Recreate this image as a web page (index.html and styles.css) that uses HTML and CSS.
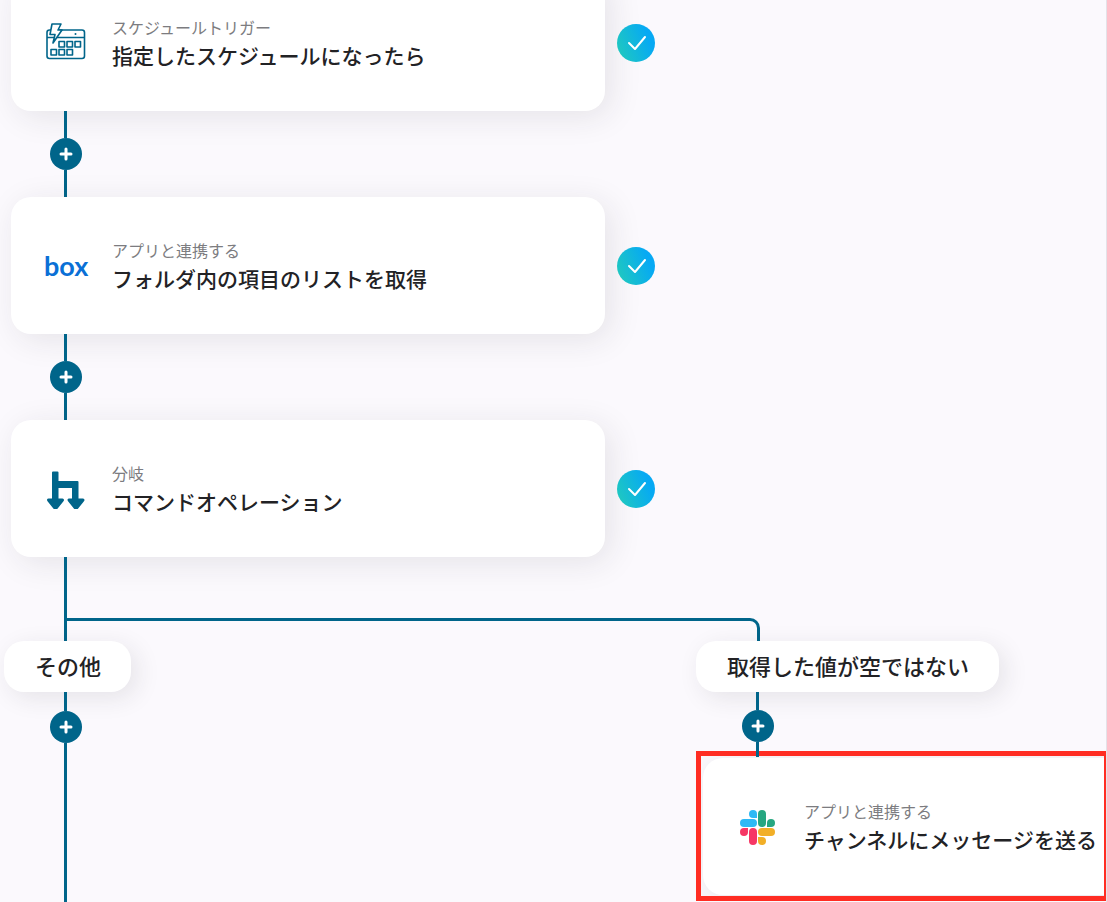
FILE: index.html
```html
<!DOCTYPE html>
<html lang="ja">
<head>
    <meta charset="UTF-8">
    <meta name="viewport" content="width=device-width, initial-scale=1.0">
    <title>フローボット</title>
    <link rel="stylesheet" href="styles.css">
</head>
<body>
    <svg width="0" height="0" class="defs" aria-hidden="true">
        <defs>
            <linearGradient id="done-fill" x1="0" y1="0.7" x2="1" y2="0.3">
                <stop offset="0" stop-color="#1fc8c0"/>
                <stop offset="0.85" stop-color="#06a9f4"/>
            </linearGradient>
            <symbol id="done" viewBox="0 0 38 38">
                <circle cx="19" cy="19" r="19" fill="url(#done-fill)"/>
                <path d="M12 19l6 6 10-12" fill="none" stroke="#fff" stroke-width="2" stroke-linecap="round" stroke-linejoin="round"/>
            </symbol>
            <symbol id="plus" viewBox="0 0 32 32">
                <path d="M16 11v10M11 16h10" stroke="#fff" stroke-width="3" stroke-linecap="round"/>
            </symbol>
        </defs>
    </svg>

    <main class="flow">
        <div class="step">
            <div class="card">
                <svg class="icon" viewBox="0 0 44 44" fill="none" stroke="#00658a" stroke-width="1.6" stroke-linejoin="round">
                    <rect x="3" y="9" width="37.500" height="28.500" rx="2.5"/>
                    <path d="M3 16.5h37"/>
                    <path d="M8 3h9l-3 6h4L9 22l2-8.500H6z" fill="#fff"/>
                    <circle cx="31.500" cy="13" r="1" fill="#00658a" stroke="none"/>
                    <path d="M15 20.500h5.500v5.500h-5.500zM23 20.500h5.500v5.500h-5.500zM31 20.500h5.500v5.500h-5.500zM7 28.500h5.500v5.500H7zM15 28.500h5.500v5.500h-5.500zM23 28.500h5.500v5.500h-5.500z"/>
                </svg>
                <div class="card-text">
                    <p class="kind">スケジュールトリガー</p>
                    <h2>指定したスケジュールになったら</h2>
                </div>
            </div>
            <svg class="done" role="img" aria-label="完了"><use href="#done"/></svg>
        </div>

        <div class="connector">
            <span class="line"></span>
            <button type="button" class="add" aria-label="追加"><svg><use href="#plus"/></svg></button>
            <span class="line"></span>
        </div>

        <div class="step">
            <div class="card">
                <span class="icon box-logo">box</span>
                <div class="card-text">
                    <p class="kind">アプリと連携する</p>
                    <h2>フォルダ内の項目のリストを取得</h2>
                </div>
            </div>
            <svg class="done" role="img" aria-label="完了"><use href="#done"/></svg>
        </div>

        <div class="connector">
            <span class="line"></span>
            <button type="button" class="add" aria-label="追加"><svg><use href="#plus"/></svg></button>
            <span class="line"></span>
        </div>

        <div class="step">
            <div class="card">
                <svg class="icon" viewBox="0 0 44 44" fill="#00658a" stroke="#00658a" stroke-linejoin="round">
                    <path d="M9 5.500h4.500v9.500h20v17h-4.500v-12H13.500v12h-4.500z" stroke-width="2"/>
                    <path d="M4.500 33h14l-6 7.500h-2zM25 33h14l-6 7.500h-2z" stroke-width="3"/>
                </svg>
                <div class="card-text">
                    <p class="kind">分岐</p>
                    <h2>コマンドオペレーション</h2>
                </div>
            </div>
            <svg class="done" role="img" aria-label="完了"><use href="#done"/></svg>
        </div>

        <div class="fork-stem"></div>
        <div class="fork"></div>

        <div class="branches">
            <section class="branch">
                <h3 class="condition">その他</h3>
                <div class="connector open">
                    <span class="line"></span>
                    <button type="button" class="add" aria-label="追加"><svg><use href="#plus"/></svg></button>
                    <span class="line"></span>
                </div>
            </section>

            <section class="branch">
                <h3 class="condition">取得した値が空ではない</h3>
                <div class="connector short">
                    <span class="line"></span>
                    <button type="button" class="add" aria-label="追加"><svg><use href="#plus"/></svg></button>
                    <span class="line"></span>
                </div>
                <div class="highlight">
                    <div class="card">
                        <svg class="icon" viewBox="0 0 44 44">
                            <g fill="#2eb9f5">
                                <rect x="4" y="14" width="17" height="8" rx="4"/>
                                <path d="M21 13h-4a4 4 0 1 1 4-4z"/>
                            </g>
                            <g fill="#27a781">
                                <rect x="22" y="5" width="8" height="17" rx="4"/>
                                <path d="M31 22v-4a4 4 0 1 1 4 4z"/>
                            </g>
                            <g fill="#f2af27">
                                <rect x="22" y="23" width="17" height="8" rx="4"/>
                                <path d="M22 32h4a4 4 0 1 1-4 4z"/>
                            </g>
                            <g fill="#f63765">
                                <rect x="13" y="23" width="8" height="17" rx="4"/>
                                <path d="M12 23v4a4 4 0 1 1-4-4z"/>
                            </g>
                        </svg>
                        <div class="card-text">
                            <p class="kind">アプリと連携する</p>
                            <h2>チャンネルにメッセージを送る</h2>
                        </div>
                    </div>
                </div>
            </section>
        </div>
    </main>
</body>
</html>
```
FILE: styles.css
```css
* {
    box-sizing: border-box;
}

body {
    font-family: "Noto Sans CJK JP", "Noto Sans", sans-serif;
    margin: 0;
    min-height: 100vh;
    background-color: #fbf9fd;
    color: #222225;
    border-right: 1px solid #e4e2e8;
    overflow: hidden;
}

h2, h3, p {
    margin: 0;
}

.defs {
    position: absolute;
}

/* the first step is scrolled partly out of view */
.flow {
    display: flex;
    flex-direction: column;
    min-height: calc(100vh + 26px);
    margin-top: -26px;
    padding-left: 4px;
}

.step {
    display: flex;
    align-items: center;
    gap: 12px;
    margin-left: 7px;
}

.card {
    display: flex;
    align-items: center;
    gap: 24px;
    width: 594px;
    height: 137px;
    padding-left: 33px;
    border-radius: 20px;
    background-color: #fff;
    box-shadow: 6px 6px 32px rgba(40, 40, 50, 0.1);
}

.icon {
    flex: none;
    width: 44px;
    height: 44px;
}

.box-logo {
    font: bold 27px/44px Lato, sans-serif;
    color: #0a70d6;
}

.card-text {
    padding-bottom: 4px;
    white-space: nowrap;
}

.kind {
    font-size: 16px;
    line-height: 28px;
    color: #7c7c80;
}

h2 {
    font-size: 21px;
    line-height: 28px;
    font-weight: 500;
}

.done {
    flex: none;
    width: 38px;
    height: 38px;
}

.connector {
    display: flex;
    flex-direction: column;
    width: 32px;
    height: 86px;
    margin-left: 46px;
}

.line {
    flex: 1;
    width: 3px;
    margin-left: 14px;
    background-color: #00658a;
}

.add {
    width: 32px;
    height: 32px;
    padding: 0;
    border: none;
    border-radius: 50%;
    background-color: #00658a;
    cursor: pointer;
}

.add svg {
    display: block;
    width: 32px;
    height: 32px;
}

.fork-stem {
    width: 3px;
    height: 61px;
    margin-left: 60px;
    background-color: #00658a;
}

.fork {
    width: 696px;
    height: 23px;
    margin-left: 60px;
    border: 3px solid #00658a;
    border-bottom: none;
    border-top-right-radius: 10px;
}

.branches {
    display: grid;
    grid-template-columns: 692px 1fr;
    flex: 1;
}

.branch {
    display: flex;
    flex-direction: column;
    align-items: flex-start;
    min-width: 0;
}

.condition {
    padding: 8px 30px 11px 31px;
    border-radius: 20px;
    background-color: #fff;
    font-size: 22px;
    line-height: 32px;
    font-weight: 500;
    box-shadow: 6px 6px 24px rgba(40, 40, 50, 0.1);
}

.open {
    flex: 1;
}

.open .line:first-child {
    flex: none;
    height: 19px;
}

/* the last piece of the line runs over the frame */
.short {
    position: relative;
    z-index: 1;
    height: 65px;
    margin-bottom: -6px;
}

.short .line:first-child {
    flex: none;
    height: 18px;
}

.highlight {
    align-self: stretch;
    height: 150px;
    margin-right: -3px;
    padding: 2px 0 1px 2px;
    border: 5px solid #ff2d23;
    overflow: hidden;
}
```
